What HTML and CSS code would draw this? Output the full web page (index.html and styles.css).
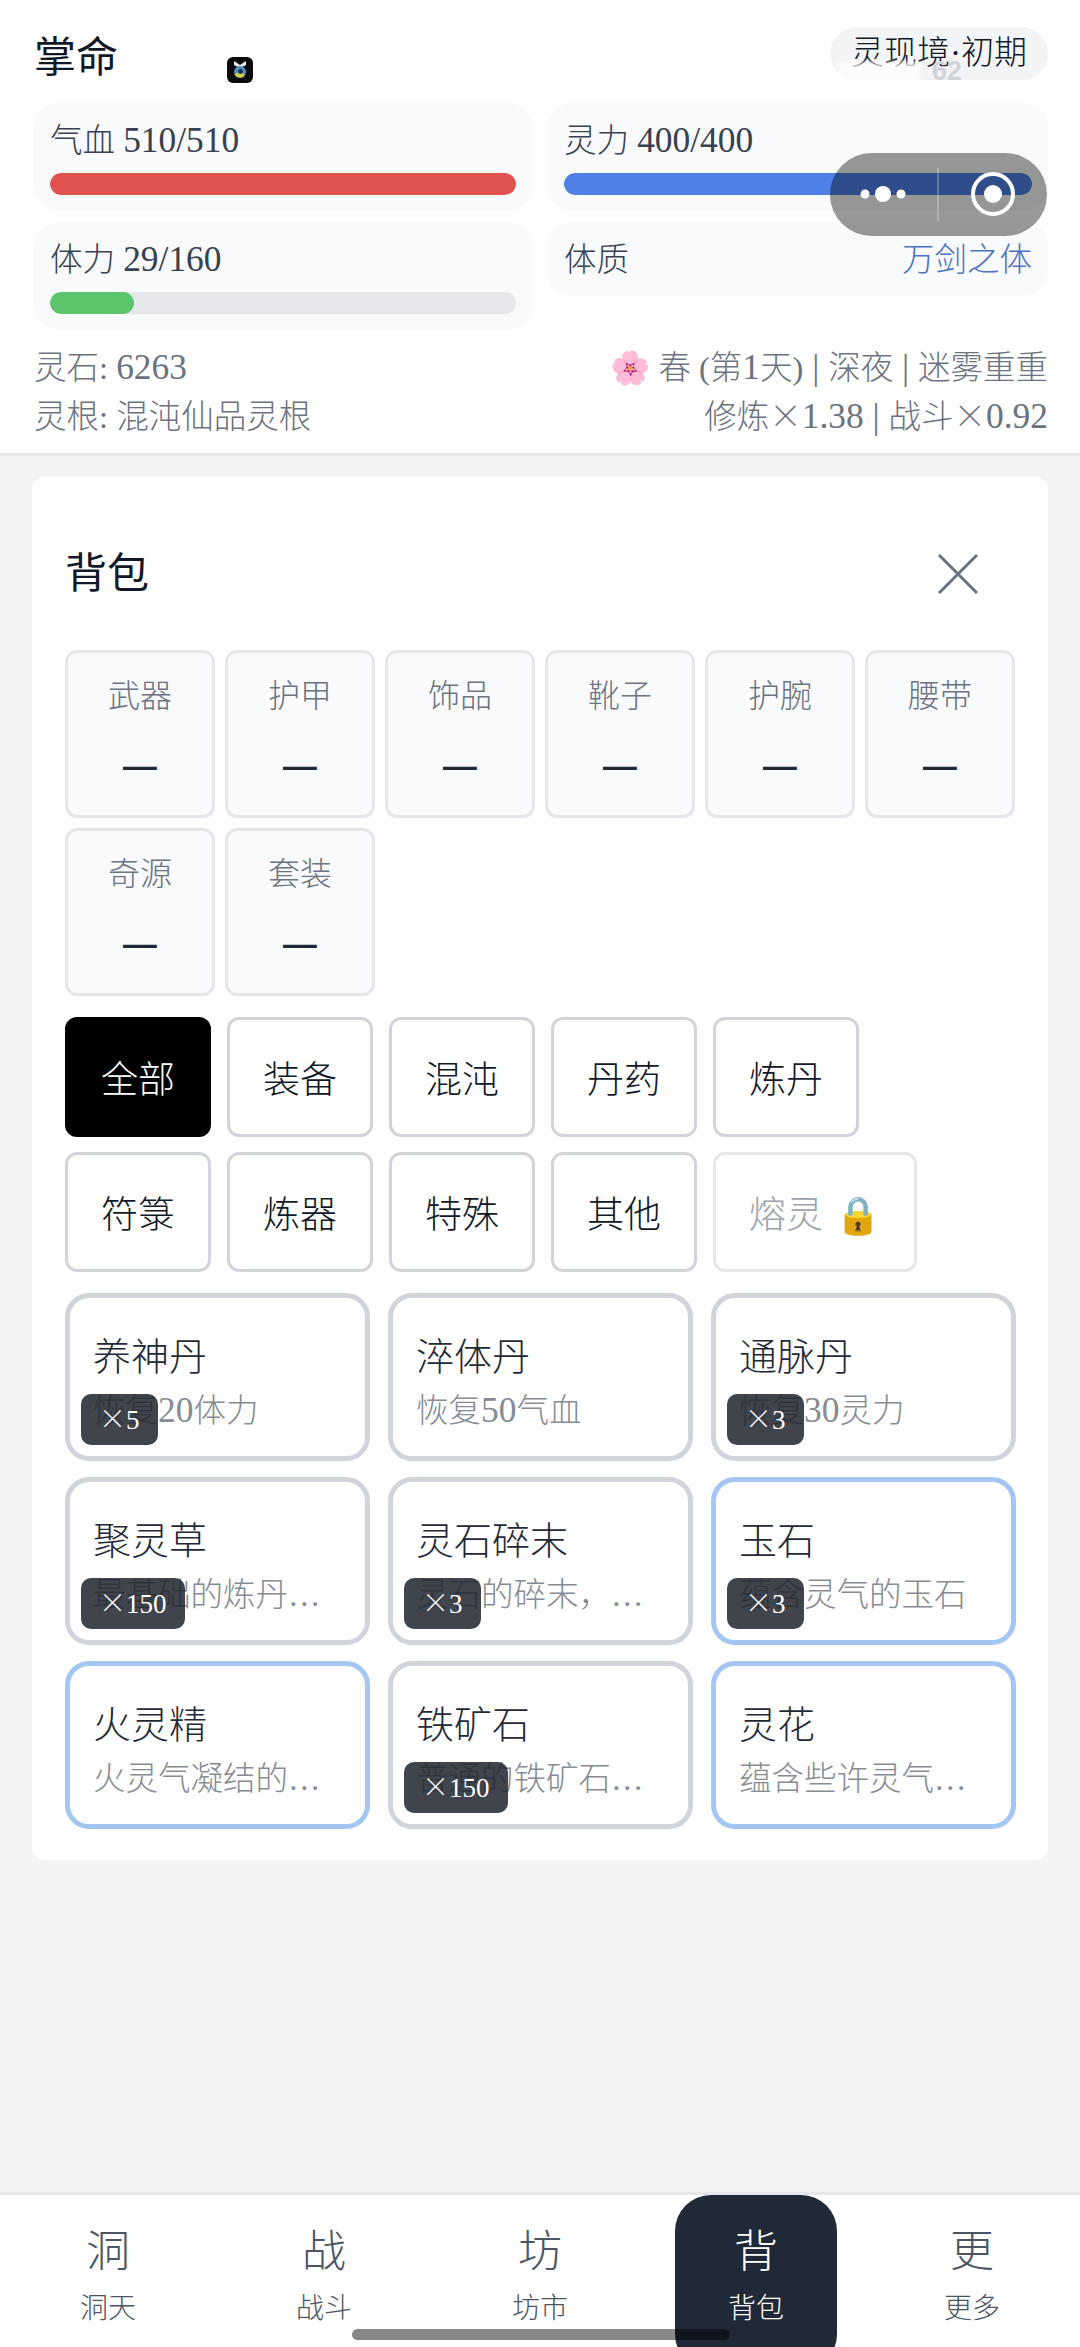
FILE: index.html
```html
<!DOCTYPE html>
<html lang="zh">
<head>
    <meta charset="UTF-8">
    <meta name="viewport" content="width=device-width, initial-scale=1.0">
    <title>背包</title>
    <link rel="stylesheet" href="styles.css">
</head>
<body>
    <div class="app">
        <header class="header">
            <div class="title-row">
                <h1 class="name">掌命</h1>
                <div class="realm">灵现境·初期</div>
            </div>
            <div class="stats">
                <div class="stat-col">
                    <div class="stat">
                        <div class="stat-label">气血 <span class="num">510/510</span></div>
                        <div class="bar"><div class="bar-fill red" style="width: 100%"></div></div>
                    </div>
                    <div class="stat">
                        <div class="stat-label">体力 <span class="num">29/160</span></div>
                        <div class="bar"><div class="bar-fill green" style="width: 18%"></div></div>
                    </div>
                </div>
                <div class="stat-col">
                    <div class="stat">
                        <div class="stat-label">灵力 <span class="num">400/400</span></div>
                        <div class="bar"><div class="bar-fill blue" style="width: 100%"></div></div>
                    </div>
                    <div class="stat stat-row">
                        <span class="stat-label">体质</span>
                        <span class="physique">万剑之体</span>
                    </div>
                </div>
            </div>
            <div class="meta">
                <div class="meta-row">
                    <span>灵石: <span class="num">6263</span></span>
                    <span>🌸 春 (第<span class="num">1</span>天)<span class="num"> | </span>深夜<span class="num"> | </span>迷雾重重</span>
                </div>
                <div class="meta-row">
                    <span>灵根: 混沌仙品灵根</span>
                    <span>修炼<span class="x">×</span><span class="num">1.38 | </span>战斗<span class="x">×</span><span class="num">0.92</span></span>
                </div>
            </div>
        </header>

        <main class="main">
            <section class="panel">
                <div class="panel-head">
                    <h2 class="panel-title">背包</h2>
                    <svg class="close" viewBox="0 0 40 40" width="40" height="40">
                        <path d="M1 1 L39 39 M39 1 L1 39" stroke="#6b7280" stroke-width="3" fill="none"/>
                    </svg>
                </div>

                <div class="slots">
                    <div class="slot"><div class="slot-label">武器</div><div class="slot-value">—</div></div>
                    <div class="slot"><div class="slot-label">护甲</div><div class="slot-value">—</div></div>
                    <div class="slot"><div class="slot-label">饰品</div><div class="slot-value">—</div></div>
                    <div class="slot"><div class="slot-label">靴子</div><div class="slot-value">—</div></div>
                    <div class="slot"><div class="slot-label">护腕</div><div class="slot-value">—</div></div>
                    <div class="slot"><div class="slot-label">腰带</div><div class="slot-value">—</div></div>
                    <div class="slot"><div class="slot-label">奇源</div><div class="slot-value">—</div></div>
                    <div class="slot"><div class="slot-label">套装</div><div class="slot-value">—</div></div>
                </div>

                <div class="tabs">
                    <button class="tab active">全部</button>
                    <button class="tab">装备</button>
                    <button class="tab">混沌</button>
                    <button class="tab">丹药</button>
                    <button class="tab">炼丹</button>
                    <button class="tab">符箓</button>
                    <button class="tab">炼器</button>
                    <button class="tab">特殊</button>
                    <button class="tab">其他</button>
                    <button class="tab locked">熔灵 🔒</button>
                </div>

                <div class="items">
                    <div class="item">
                        <div class="item-name">养神丹</div>
                        <div class="item-desc">恢复<span class="num">20</span>体力</div>
                        <span class="count"><span class="x">×</span>5</span>
                    </div>
                    <div class="item">
                        <div class="item-name">淬体丹</div>
                        <div class="item-desc">恢复<span class="num">50</span>气血</div>
                    </div>
                    <div class="item">
                        <div class="item-name">通脉丹</div>
                        <div class="item-desc">恢复<span class="num">30</span>灵力</div>
                        <span class="count"><span class="x">×</span>3</span>
                    </div>
                    <div class="item">
                        <div class="item-name">聚灵草</div>
                        <div class="item-desc">最基础的炼丹材料</div>
                        <span class="count"><span class="x">×</span>150</span>
                    </div>
                    <div class="item">
                        <div class="item-name">灵石碎末</div>
                        <div class="item-desc">灵石的碎末，可用于合成</div>
                        <span class="count"><span class="x">×</span>3</span>
                    </div>
                    <div class="item rare">
                        <div class="item-name">玉石</div>
                        <div class="item-desc">蕴含灵气的玉石</div>
                        <span class="count"><span class="x">×</span>3</span>
                    </div>
                    <div class="item rare">
                        <div class="item-name">火灵精</div>
                        <div class="item-desc">火灵气凝结的精华</div>
                    </div>
                    <div class="item">
                        <div class="item-name">铁矿石</div>
                        <div class="item-desc">普通的铁矿石，用于炼器</div>
                        <span class="count"><span class="x">×</span>150</span>
                    </div>
                    <div class="item rare">
                        <div class="item-name">灵花</div>
                        <div class="item-desc">蕴含些许灵气的花朵</div>
                    </div>
                </div>
            </section>
        </main>

        <nav class="nav">
            <div class="nav-item"><div class="nav-icon">洞</div><div class="nav-label">洞天</div></div>
            <div class="nav-item"><div class="nav-icon">战</div><div class="nav-label">战斗</div></div>
            <div class="nav-item"><div class="nav-icon">坊</div><div class="nav-label">坊市</div></div>
            <div class="nav-item active"><div class="nav-icon">背</div><div class="nav-label">背包</div></div>
            <div class="nav-item"><div class="nav-icon">更</div><div class="nav-label">更多</div></div>
        </nav>

        <!-- things the phone draws over the page -->
        <div class="ghost-patch"></div>
        <div class="ghost-time">62</div>
        <svg class="float-icon" viewBox="0 0 28 28" width="28" height="28">
            <rect x="1" y="1" width="26" height="26" rx="6" fill="#0b0b0b"/>
            <path d="M8 5 L14 9 L20 5 L20 9 L14 12 L8 9 Z" fill="#e8edf2"/>
            <circle cx="14" cy="16" r="6" fill="#4f8fc4"/>
            <path d="M8.5 18 A6 6 0 0 0 19 19 L14 16 Z" fill="#d7cf3f"/>
            <circle cx="14.5" cy="15.5" r="2.4" fill="#16324a"/>
        </svg>
        <div class="capsule">
            <svg viewBox="0 0 217 83" width="217" height="83">
                <circle cx="35" cy="41" r="4.5" fill="#fff"/>
                <circle cx="53" cy="41" r="8" fill="#fff"/>
                <circle cx="71" cy="41" r="4.5" fill="#fff"/>
                <path d="M108 15 V68" stroke="#fff" stroke-opacity="0.35" stroke-width="1.5"/>
                <circle cx="163" cy="41" r="20" fill="none" stroke="#fff" stroke-width="4"/>
                <circle cx="163" cy="41" r="9" fill="#fff"/>
            </svg>
        </div>
        <div class="home-bar"></div>
    </div>
</body>
</html>
```

FILE: styles.css
```css
* {
    box-sizing: border-box;
}
html, body {
    margin: 0;
    padding: 0;
}
body {
    font-family: "Liberation Serif", "Noto Sans CJK SC", serif;
    font-weight: 300;
    background-color: #f3f4f6;
    color: #1f2937;
}
.app {
    position: relative;
    width: 1080px;
    height: 2347px;
    display: flex;
    flex-direction: column;
    overflow: hidden;
}
.x {
    font-family: "Noto Sans CJK SC", sans-serif;
    line-height: 1;
}
.num {
    font-size: 1.09em;
    line-height: 1;
}

/* header */
.header {
    background: white;
    height: 456px;
    padding: 27px 32px 0 34px;
    border-bottom: 3px solid #e5e7eb;
}
.title-row {
    display: flex;
    justify-content: space-between;
    align-items: center;
    height: 53px;
    margin-bottom: 23px;
}
.name {
    margin: 0;
    font-size: 42px;
    font-weight: 400;
    color: #111827;
}
.realm {
    background: #f3f4f6;
    border-radius: 27px;
    height: 53px;
    padding: 0 21px;
    font-size: 33px;
    line-height: 53px;
    color: #111827;
}
.stats {
    display: grid;
    grid-template-columns: 498px 500px;
    gap: 16px;
}
.stat-col {
    display: flex;
    flex-direction: column;
    gap: 11px;
}
.stat {
    background: #f9fafb;
    border-radius: 24px;
    padding: 16px;
    height: 108px;
}
.stat-label {
    font-size: 32.5px;
    line-height: 44px;
    color: #374151;
}
.stat-row {
    display: flex;
    justify-content: space-between;
    height: 74px;
}
.physique {
    font-size: 32.5px;
    line-height: 44px;
    color: #4a72c4;
}
.bar {
    height: 22px;
    margin-top: 10px;
    background: #e5e7eb;
    border-radius: 11px;
    overflow: hidden;
}
.bar-fill {
    height: 100%;
    border-radius: 11px;
}
.red {
    background: #e0524d;
}
.green {
    background: #5cc46a;
}
.blue {
    background: #4f80e8;
}
.meta {
    margin-top: 14px;
    font-size: 32.5px;
    line-height: 49px;
    color: #6b7280;
}
.meta-row {
    display: flex;
    justify-content: space-between;
}

/* panel */
.main {
    flex: 1;
    padding: 21px 32px;
}
.panel {
    background: white;
    border-radius: 12px;
    height: 1383px;
    padding: 0 33px;
}
.panel-head {
    display: flex;
    justify-content: space-between;
    align-items: center;
    height: 173px;
    padding-top: 12px;
    padding-right: 37px;
}
.panel-title {
    margin: 0;
    font-size: 42px;
    font-weight: 400;
    color: #111827;
}
.close {
    display: block;
    margin-top: 8px;
}
.slots {
    display: grid;
    grid-template-columns: repeat(6, 150px);
    gap: 10px;
}
.slot {
    height: 168px;
    background: #f9fafb;
    border: 3px solid #e5e7eb;
    border-radius: 12px;
    text-align: center;
    padding-top: 21px;
}
.slot-label {
    font-size: 32px;
    line-height: 44px;
    color: #6b7280;
}
.slot-value {
    margin-top: 21px;
    font-family: "Noto Sans CJK SC", sans-serif;
    font-size: 42px;
    font-weight: 500;
    line-height: 46px;
    color: #1f2937;
}
.tabs {
    display: flex;
    flex-wrap: wrap;
    gap: 15px 16px;
    margin-top: 21px;
    width: 900px;
}
.tab {
    height: 120px;
    padding: 0 33px;
    background: white;
    border: 3px solid #d1d5db;
    border-radius: 12px;
    font-family: inherit;
    font-weight: 300;
    font-size: 37px;
    color: #111827;
}
.tab.active {
    background: black;
    border-color: black;
    color: white;
}
.tab.locked {
    border-color: #e5e7eb;
    color: #9ca3af;
    word-spacing: 3px;
}
.items {
    display: grid;
    grid-template-columns: repeat(3, 305px);
    gap: 16px 18px;
    margin-top: 21px;
}
.item {
    position: relative;
    height: 168px;
    background: white;
    border: 5px solid #d1d5db;
    border-radius: 24px;
    padding: 33px 23px 0;
}
.item.rare {
    border-color: #a3c6f3;
}
.item-name {
    font-size: 38px;
    line-height: 52px;
    color: #1f2937;
}
.item-desc {
    margin-top: 5px;
    font-size: 32.5px;
    line-height: 46px;
    color: #868b94;
    white-space: nowrap;
    overflow: hidden;
    text-overflow: ellipsis;
}
.count {
    position: absolute;
    left: 11px;
    bottom: 11px;
    height: 51px;
    padding: 0 18px;
    background: rgba(30, 35, 45, 0.85);
    color: white;
    border-radius: 10px;
    font-size: 27px;
    line-height: 52px;
}

/* bottom nav */
.nav {
    height: 155px;
    background: white;
    border-top: 3px solid #e5e7eb;
    display: grid;
    grid-template-columns: repeat(5, 1fr);
    justify-items: center;
}
.nav-item {
    width: 162px;
    text-align: center;
    padding-top: 29px;
    border-radius: 36px;
    color: #4b5563;
}
.nav-item.active {
    background: #1f2937;
    color: white;
    height: 175px;
}
.nav-icon {
    font-size: 44px;
    line-height: 58px;
}
.nav-label {
    font-size: 28px;
    line-height: 40px;
    margin-top: 7px;
}

/* overlays */
.ghost-patch {
    position: absolute;
    left: 838px;
    top: 62px;
    width: 82px;
    height: 20px;
    background: rgba(255, 255, 255, 0.75);
    filter: blur(2px);
}
.ghost-time {
    position: absolute;
    left: 932px;
    top: 56px;
    height: 24px;
    overflow: hidden;
    font-family: "Liberation Sans", sans-serif;
    font-weight: bold;
    font-size: 27px;
    line-height: 30px;
    color: #d1d5db;
}
.float-icon {
    position: absolute;
    left: 226px;
    top: 56px;
}
.capsule {
    position: absolute;
    left: 830px;
    top: 153px;
    width: 217px;
    height: 83px;
    border-radius: 42px;
    background: rgba(0, 0, 0, 0.4);
}
.capsule svg {
    display: block;
}
.home-bar {
    position: absolute;
    left: 352px;
    top: 2329px;
    width: 378px;
    height: 11px;
    border-radius: 6px;
    background: rgba(0, 0, 0, 0.47);
}
```
